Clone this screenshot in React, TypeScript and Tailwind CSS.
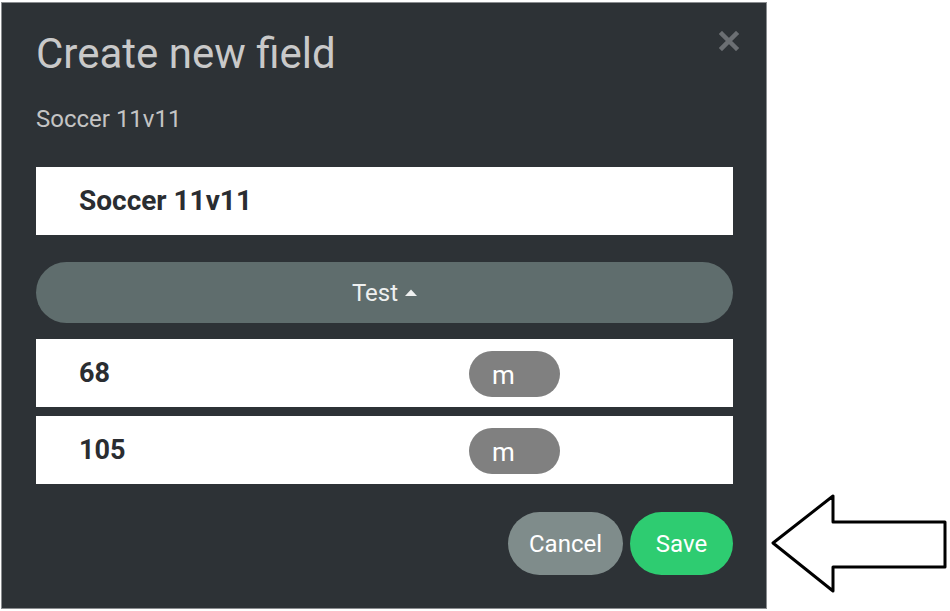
export default function App() {
  return (
    <div className="flex h-[611px] w-[950px] overflow-hidden bg-white font-['Roboto',sans-serif]">
      <div className="ml-px mt-[2px] flex h-[607px] w-[766px] flex-col border border-[#8a8d90] bg-[#2d3236] px-[34px]">
        <div className="flex items-start justify-between">
          <h1 className="mt-[27px] text-[42px] leading-[48px] text-[#c9c9c9]">Create new field</h1>
          <button className="mr-[-7px] mt-[28px] text-[#6b6f73]">
            <svg width="20" height="20" viewBox="0 0 20 20">
              <path d="M3 3 L17 17 M17 3 L3 17" stroke="currentColor" strokeWidth="4.5" strokeLinecap="square" />
            </svg>
          </button>
        </div>
        <p className="mt-[27px] text-[24px] leading-[28px] text-[#c4c4c4]">Soccer 11v11</p>
        <div className="mt-[34px] flex h-[68px] w-[697px] items-center bg-white pl-[43px]">
          <span className="text-[28px] font-bold text-[#2a2d31]">Soccer 11v11</span>
        </div>
        <button className="mt-[27px] flex h-[61px] w-[697px] items-center justify-center gap-[7px] rounded-full bg-[#5f6d6d] text-[24px] text-[#eef0f0]">
          Test
          <svg width="12" height="8" viewBox="0 0 12 8">
            <path d="M0 7 L6 0.5 L12 7 Z" fill="currentColor" />
          </svg>
        </button>
        {["68", "105"].map((v, i) => (
          <div
            key={v}
            className={`${i === 0 ? "mt-[16px]" : "mt-[9px]"} flex h-[68px] w-[697px] items-center bg-white pl-[43px]`}
          >
            <span className="w-[390px] text-[27px] font-bold text-[#2a2d31]">{v}</span>
            <span className="mt-[1px] flex h-[46px] w-[91px] items-center rounded-full bg-[#808080] pl-[23px] pt-[4px] text-[26px] text-white">
              m
            </span>
          </div>
        ))}
        <div className="mt-[28px] flex w-[697px] justify-end gap-[7px]">
          <button className="h-[63px] w-[115px] rounded-full bg-[#7f8c8b] text-[24px] text-white">Cancel</button>
          <button className="h-[63px] w-[103px] rounded-full bg-[#2ecc71] text-[24px] text-white">Save</button>
        </div>
      </div>
      <svg className="ml-[3px] mt-[494px]" width="178" height="100" viewBox="0 0 178 100">
        <path
          d="M3 49 L63 2 L63 28 L175 28 L175 73 L63 73 L63 97 Z"
          fill="white"
          stroke="black"
          strokeWidth="3"
          strokeLinejoin="round"
        />
      </svg>
    </div>
  );
}
